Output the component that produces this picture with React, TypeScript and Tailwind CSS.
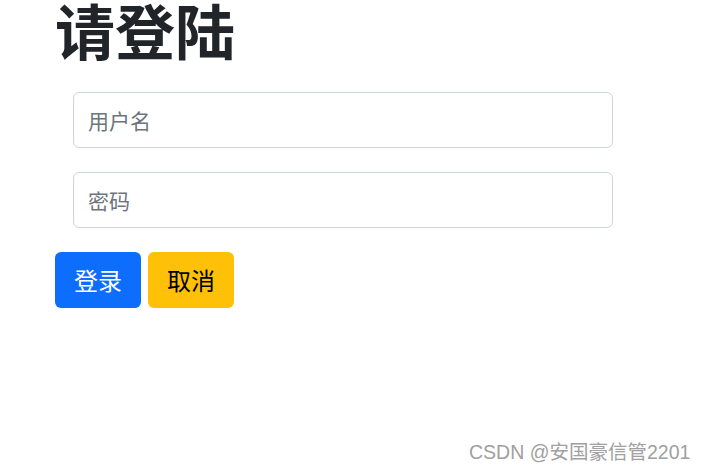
import React from "react";

export default function App() {
  return (
    <div
      className="relative w-[704px] h-[472px] bg-white overflow-hidden"
      style={{ fontFamily: '"Noto Sans CJK SC", "Noto Sans", sans-serif' }}
    >
      <div className="pl-[55px]">
        <h1 className="text-[60px] leading-[58px] font-bold text-[#212529] pt-[0px]">请登陆</h1>
        <div className="flex flex-col gap-[24px] pl-[18px] mt-[34px]">
          <input
            className="w-[540px] h-[56px] border border-[#ced4da] rounded-[6px] px-[14px] text-[21px] text-[#212529] placeholder:text-[#6c757d] outline-none"
            placeholder="用户名"
          />
          <input
            type="password"
            className="w-[540px] h-[56px] border border-[#ced4da] rounded-[6px] px-[14px] text-[21px] text-[#212529] placeholder:text-[#6c757d] outline-none"
            placeholder="密码"
          />
        </div>
        <div className="flex gap-[7px] mt-[24px]">
          <button className="w-[86px] h-[56px] rounded-[6px] bg-[#0d6efd] text-white text-[24px]">登录</button>
          <button className="w-[86px] h-[56px] rounded-[6px] bg-[#ffc107] text-black text-[24px]">取消</button>
        </div>
      </div>
      <div
        className="absolute left-[469px] top-[440px] text-[19.5px] leading-[24px] text-[#a0a0a0]"
        style={{ fontFamily: '"Liberation Sans", "Noto Sans CJK SC", sans-serif' }}
      >
        CSDN @安国豪信管2201
      </div>
    </div>
  );
}
